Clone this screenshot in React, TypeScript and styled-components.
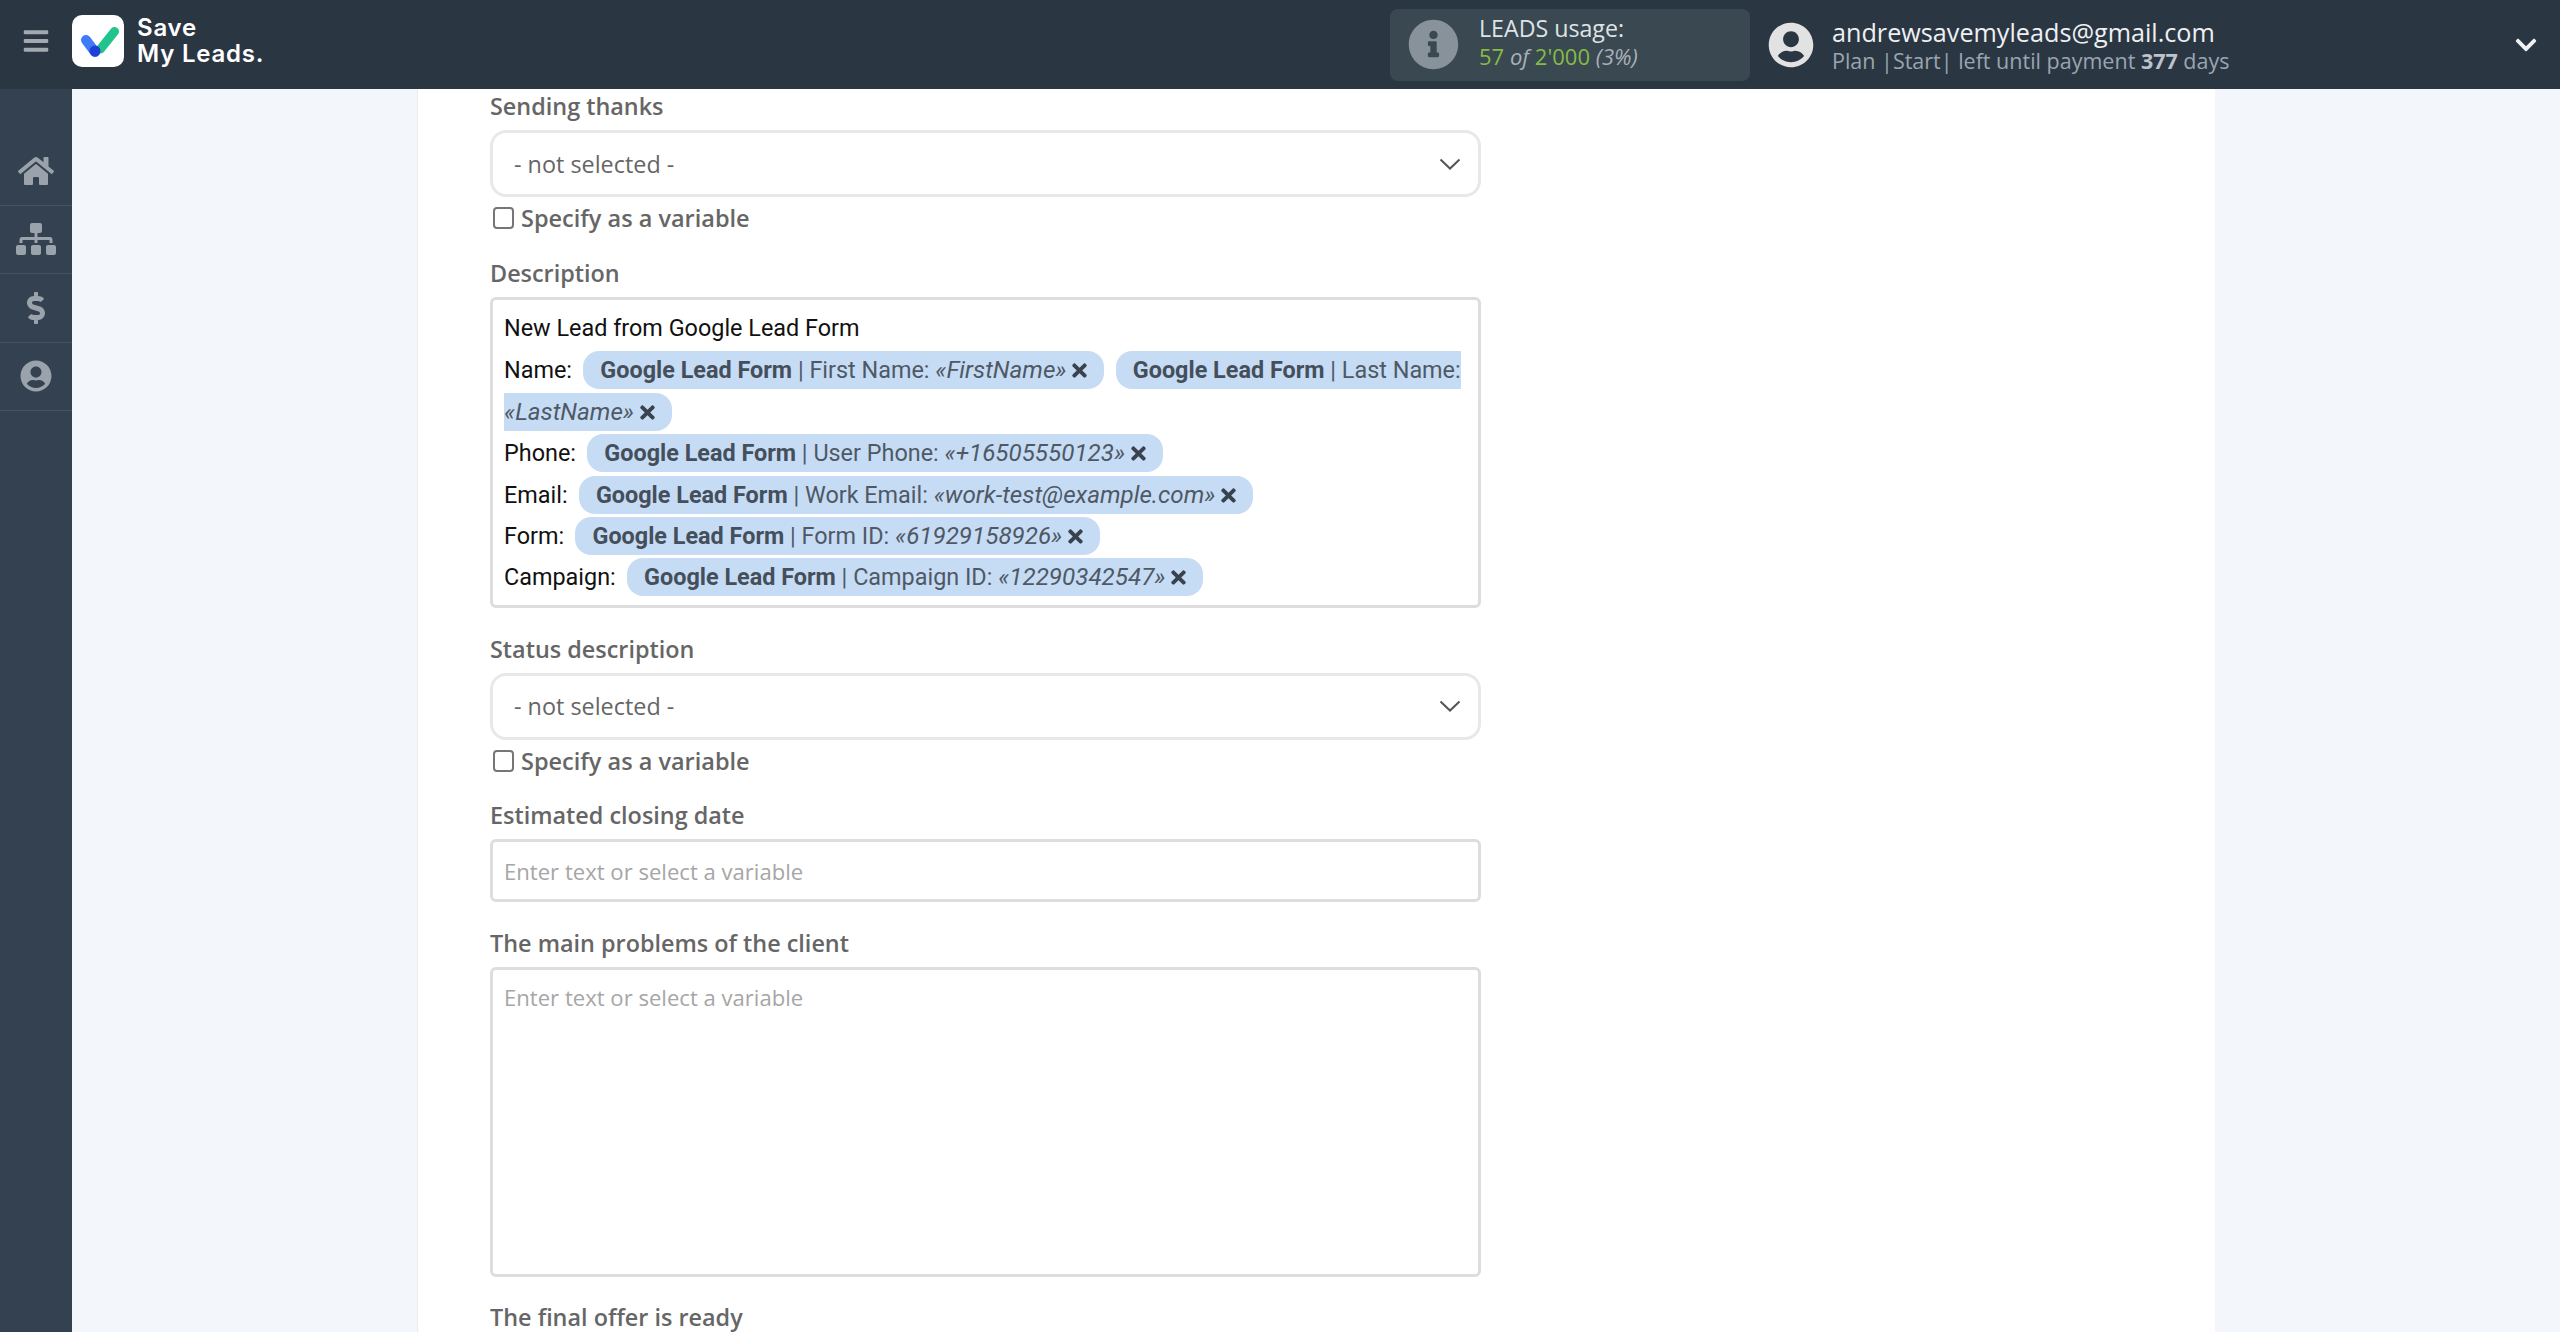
import * as React from 'react';
import styled, { createGlobalStyle } from 'styled-components';
import { FaBars, FaHome, FaSitemap, FaDollarSign, FaUserCircle, FaInfoCircle, FaChevronDown, FaTimes } from 'react-icons/fa';

const GlobalStyle = createGlobalStyle`
    html, body {
        margin: 0;
        padding: 0;
        height: 100%;
        overflow: hidden;
        background: #f3f6fb;
    }
    #root {
        height: 100%;
    }
    * {
        box-sizing: border-box;
    }
`;

const descriptionRows = [
    { title: 'Name:', tags: [
        { field: 'First Name:', value: '«FirstName»' },
        { field: 'Last Name:', value: '«LastName»' },
    ] },
    { title: 'Phone:', tags: [{ field: 'User Phone:', value: '«+16505550123»' }] },
    { title: 'Email:', tags: [{ field: 'Work Email:', value: '«work-test@example.com»' }] },
    { title: 'Form:', tags: [{ field: 'Form ID:', value: '«61929158926»' }] },
    { title: 'Campaign:', tags: [{ field: 'Campaign ID:', value: '«12290342547»' }] },
];

const Select = () => (
    <SelectBox>
        <SelectText>- not selected -</SelectText>
        <svg width="22" height="12" viewBox="0 0 22 12" fill="none">
            <polyline points="1.5,1.5 11,10.5 20.5,1.5" stroke="#555" strokeWidth="2" />
        </svg>
    </SelectBox>
);

const SpecifyVariable = () => (
    <CheckRow>
        <CheckBox />
        <CheckLabel>Specify as a variable</CheckLabel>
    </CheckRow>
);

const App = () => (
    <Page>
        <GlobalStyle />
        <Header>
            <Brand>
                <MenuButton><FaBars size={28} /></MenuButton>
                <LogoTile>
                    <svg width="44" height="36" viewBox="0 0 44 36" fill="none">
                        <line x1="10" y1="17" x2="19" y2="29" stroke="#3f7bf6" strokeWidth="10" strokeLinecap="round" />
                        <line x1="24.5" y1="26" x2="38.5" y2="8.5" stroke="#22c48d" strokeWidth="9" strokeLinecap="round" />
                        <circle cx="19" cy="28" r="5.5" fill="#1f3fd6" />
                    </svg>
                </LogoTile>
                <LogoText>Save<br />My Leads.</LogoText>
            </Brand>
            <Usage>
                <UsageIcon><FaInfoCircle size={51} /></UsageIcon>
                <UsageText>
                    <UsageTitle>LEADS usage:</UsageTitle>
                    <UsageLine>
                        <Green>57</Green> <Muted>of</Muted> <Green>2'000</Green> <Muted>(3%)</Muted>
                    </UsageLine>
                </UsageText>
            </Usage>
            <UserBlock>
                <UserIcon><FaUserCircle size={46} /></UserIcon>
                <div>
                    <UserEmail>andrewsavemyleads@gmail.com</UserEmail>
                    <UserPlan>Plan |Start| left until payment <b>377</b> days</UserPlan>
                </div>
            </UserBlock>
            <HeaderChevron><FaChevronDown size={24} /></HeaderChevron>
        </Header>
        <Body>
            <Sidebar>
                <SideItem><FaHome size={36} /></SideItem>
                <SideItem><FaSitemap size={40} /></SideItem>
                <SideItem><FaDollarSign size={32} /></SideItem>
                <SideItem><FaUserCircle size={32} /></SideItem>
            </Sidebar>
            <Main>
                <Panel>
                    <Form>
                        <Field>
                            <Label>Sending thanks</Label>
                            <Select />
                            <SpecifyVariable />
                        </Field>
                        <Field>
                            <Label>Description</Label>
                            <RichBox>
                                <RichLine>New Lead from Google Lead Form</RichLine>
                                {descriptionRows.map(row => (
                                    <RichLine key={row.title}>
                                        {row.title}
                                        {row.tags.map(tag => (
                                            <React.Fragment key={tag.field}>
                                                {' '}
                                                <Tag>
                                                    <b>Google Lead Form</b> | {tag.field} <i>{tag.value}</i>
                                                    <TagClose><FaTimes size={21} /></TagClose>
                                                </Tag>
                                            </React.Fragment>
                                        ))}
                                    </RichLine>
                                ))}
                            </RichBox>
                        </Field>
                        <Field>
                            <Label>Status description</Label>
                            <Select />
                            <SpecifyVariable />
                        </Field>
                        <Field>
                            <Label>Estimated closing date</Label>
                            <TextInput>Enter text or select a variable</TextInput>
                        </Field>
                        <Field>
                            <Label>The main problems of the client</Label>
                            <TextArea>Enter text or select a variable</TextArea>
                        </Field>
                        <Field>
                            <Label>The final offer is ready</Label>
                        </Field>
                    </Form>
                </Panel>
            </Main>
        </Body>
    </Page>
);

const Page = styled.div`
    height: 100%;
    display: flex;
    flex-direction: column;
    overflow: hidden;
`;

const Header = styled.header`
    height: 89px;
    flex: none;
    display: flex;
    align-items: center;
    background: #2b3643;
    font-family: "Open Sans", sans-serif;
`;

const Brand = styled.div`
    width: 1390px;
    padding-bottom: 7px;
    display: flex;
    align-items: center;
`;

const MenuButton = styled.div`
    width: 72px;
    display: flex;
    justify-content: center;
    color: #a3a9b0;
`;

const LogoTile = styled.div`
    width: 52px;
    height: 52px;
    border-radius: 10px;
    background: #ffffff;
    display: flex;
    align-items: center;
    justify-content: center;
`;

const LogoText = styled.div`
    margin-left: 13px;
    font-family: Inter, sans-serif;
    font-weight: 600;
    font-size: 24px;
    line-height: 26px;
    letter-spacing: 0.8px;
    color: #ffffff;
`;

const Usage = styled.div`
    width: 360px;
    height: 72px;
    flex: none;
    display: flex;
    align-items: center;
    padding-left: 18px;
    gap: 20px;
    border-radius: 8px;
    background: #3a4852;
`;

const UsageIcon = styled.div`
    display: flex;
    color: #87929a;
`;

const UsageText = styled.div`
    padding-bottom: 6px;
`;

const UsageTitle = styled.div`
    font-size: 23.2px;
    line-height: 28px;
    color: #dfe3e6;
`;

const UsageLine = styled.div`
    font-size: 22px;
    line-height: 28px;
`;

const Green = styled.span`
    color: #86bc45;
`;

const Muted = styled.span`
    font-style: italic;
    color: #a9b1b8;
`;

const UserBlock = styled.div`
    flex: 1;
    margin-left: 18px;
    display: flex;
    align-items: center;
    gap: 18px;
`;

const UserIcon = styled.div`
    display: flex;
    color: #e2e2e2;
`;

const UserEmail = styled.div`
    font-size: 25.2px;
    line-height: 31px;
    padding-top: 1px;
    color: #eef0f2;
`;

const UserPlan = styled.div`
    font-size: 21.5px;
    line-height: 26px;
    color: #9aa5b1;

    b {
        font-weight: 700;
        color: #bcc3ca;
    }
`;

const HeaderChevron = styled.div`
    margin-right: 22px;
    display: flex;
    color: #eef0f2;
`;

const Body = styled.div`
    flex: 1;
    min-height: 0;
    display: flex;
`;

const Sidebar = styled.nav`
    width: 72px;
    flex: none;
    padding-top: 48px;
    background: #344150;
`;

const SideItem = styled.div`
    height: 68.5px;
    display: flex;
    align-items: center;
    justify-content: center;
    color: #9aa2ab;
    border-bottom: 1px solid #46525f;
`;

const Main = styled.main`
    flex: 1;
    min-width: 0;
    padding-left: 345px;
    padding-right: 345px;
    background: #f3f6fb;
`;

const Panel = styled.div`
    height: 100%;
    background: #ffffff;
    border-left: 1px solid #e9ecef;
    padding: 3px 0 0 72px;
`;

const Form = styled.div`
    width: 991px;
`;

const Field = styled.div`
    margin-bottom: 27.5px;

    &:first-child {
        margin-bottom: 28px;
    }
`;

const Label = styled.div`
    font-family: "Open Sans", sans-serif;
    font-weight: 600;
    font-size: 23.4px;
    line-height: 26px;
    margin: 1px 0 11px;
    color: #666666;
`;

const SelectBox = styled.div`
    height: 67px;
    margin-top: 1px;
    display: flex;
    align-items: center;
    justify-content: space-between;
    padding: 0 17px 0 21px;
    border: 3px solid #e8e8e8;
    border-radius: 16px;
    background: #ffffff;
`;

const SelectText = styled.span`
    font-family: "Open Sans", sans-serif;
    font-size: 23.4px;
    color: #666666;
`;

const CheckRow = styled.div`
    height: 28px;
    margin-top: 7px;
    display: flex;
    align-items: center;
    gap: 7px;
    padding-left: 3px;
`;

const CheckBox = styled.span`
    width: 21px;
    height: 22px;
    border: 2px solid #767676;
    border-radius: 4px;
    background: #ffffff;
`;

const CheckLabel = styled.span`
    font-family: "Open Sans", sans-serif;
    font-weight: 600;
    font-size: 23.5px;
    color: #666666;
`;

const RichBox = styled.div`
    height: 311px;
    padding: 9px 9px 0 11px;
    border: 3px solid #dddddd;
    border-radius: 6px;
    font-family: Roboto, sans-serif;
    font-size: 23.4px;
    color: #111111;
`;

const RichLine = styled.div`
    line-height: 41.4px;

    &:first-child {
        line-height: 39.4px;
        margin-bottom: 2px;
    }
`;

const Tag = styled.span`
    margin-left: 5.5px;
    padding: 5px 14px 5px 17px;
    border-radius: 16px;
    background: #c6dcf5;
    color: #4f5965;

    b {
        font-weight: 700;
        color: #454f5b;
    }

    i {
        font-size: 24.2px;
    }
`;

const TagClose = styled.span`
    margin-left: 3px;
    color: #39434f;

    svg {
        vertical-align: -3px;
    }
`;

const TextInput = styled.div`
    height: 63px;
    margin-bottom: 1.5px;
    display: flex;
    align-items: center;
    padding: 0 11px;
    border: 3px solid #dddddd;
    border-radius: 6px;
    font-family: "Open Sans", sans-serif;
    font-size: 22.1px;
    color: #a6a6a6;
`;

const TextArea = styled.div`
    height: 310px;
    padding: 12px 11px;
    border: 3px solid #dddddd;
    border-radius: 6px;
    font-family: "Open Sans", sans-serif;
    font-size: 22.1px;
    color: #a6a6a6;
`;

export default App;
